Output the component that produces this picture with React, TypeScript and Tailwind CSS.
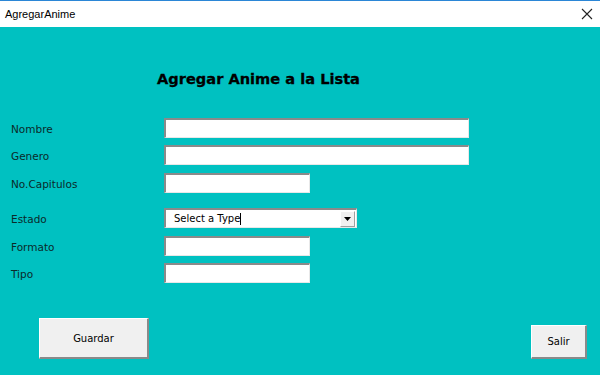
import React from "react";

const font = { fontFamily: "Tahoma, 'DejaVu Sans', 'Liberation Sans', sans-serif" };

function Field({ label, width, top }: { label: string; width: number; top: number }) {
  return (
    <div className="flex items-center" style={{ marginTop: top }}>
      <span className="w-[164px] pl-[11px] pt-[4px] text-[10.5px] text-[#0b2a2a]">{label}</span>
      <div
        className="h-[20px] bg-white border-t-2 border-l-2 border-t-[#8a8a8a] border-l-[#8a8a8a] border-b border-r border-b-[#e8e8e8] border-r-[#e8e8e8]"
        style={{ width }}
      />
    </div>
  );
}

export default function App() {
  return (
    <div className="w-[600px] h-[375px] flex flex-col overflow-hidden" style={font}>
      <div className="h-[27px] bg-white border-t border-[#2b86d6] flex items-center justify-between pl-[5px] pr-[7px]">
        <span className="text-[11px] text-black" style={{ fontFamily: "'Liberation Sans', sans-serif" }}>AgregarAnime</span>
        <svg width="12" height="12" viewBox="0 0 12 12">
          <path d="M1 1 L11 11 M11 1 L1 11" stroke="#222" strokeWidth="1.1" />
        </svg>
      </div>
      <div className="flex-1 bg-[#00c1c1] flex flex-col">
        <h1 className="pl-[157px] pt-[41px] text-[14.6px] font-bold text-black leading-[22px] [-webkit-text-stroke:0.3px_black]">Agregar Anime a la Lista</h1>
        <div className="flex flex-col">
          <Field label="Nombre" width={305} top={28} />
          <Field label="Genero" width={305} top={7} />
          <Field label="No.Capitulos" width={146} top={8} />
          <div className="flex items-center mt-[15px]">
            <span className="w-[164px] pl-[11px] pt-[4px] text-[10.5px] text-[#0b2a2a]">Estado</span>
            <div className="w-[193px] h-[20px] bg-white border-t-2 border-l-2 border-t-[#8a8a8a] border-l-[#8a8a8a] border-b border-r border-b-[#e8e8e8] border-r-[#e8e8e8] flex items-center">
              <span className="pl-[8px] text-[10px] text-black flex-1 flex items-center">
                Select a Type<span className="inline-block w-px h-[12px] bg-black" />
              </span>
              <div className="w-[15px] h-[16px] bg-[#f0f0f0] border border-[#a0a0a0] border-t-white border-l-white flex items-center justify-center mr-[1px]">
                <svg width="7" height="4" viewBox="0 0 7 4"><path d="M0 0 H7 L3.5 4 Z" fill="#000" /></svg>
              </div>
            </div>
          </div>
          <Field label="Formato" width={146} top={8} />
          <Field label="Tipo" width={146} top={7} />
        </div>
        <div className="flex-1 flex items-end justify-between pl-[39px] pr-[13px] pb-[16px]">
          <button className="w-[110px] h-[41px] bg-[#f0f0f0] border-t border-l border-white border-r-2 border-b-2 border-r-[#8a8a8a] border-b-[#8a8a8a] text-[10px] text-black">
            Guardar
          </button>
          <button className="w-[56px] h-[34px] bg-[#f0f0f0] border-t border-l border-white border-r-2 border-b-2 border-r-[#8a8a8a] border-b-[#8a8a8a] text-[10px] text-black">
            Salir
          </button>
        </div>
      </div>
    </div>
  );
}
